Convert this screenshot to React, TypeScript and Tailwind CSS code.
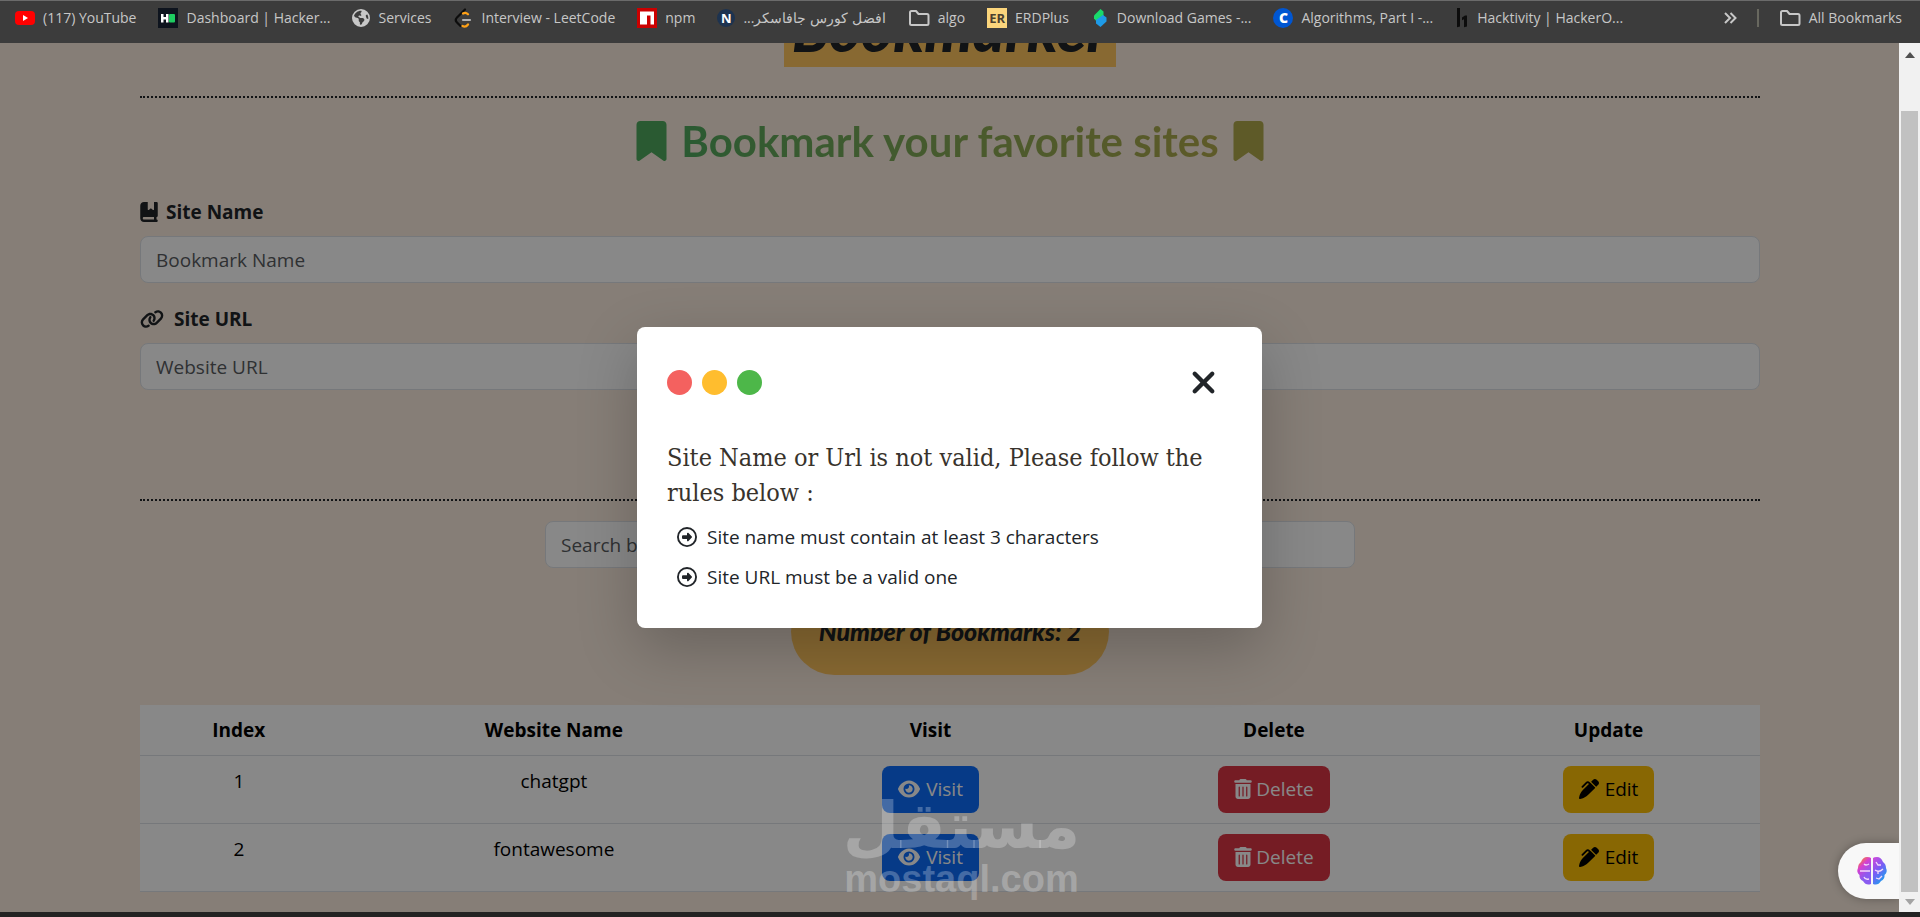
import type { ReactNode } from "react";
import {
  FaBookBookmark,
  FaBookmark,
  FaEarthAmericas,
  FaEye,
  FaLink,
  FaPenClip,
  FaRegCircleRight,
  FaTrashCan,
  FaXmark,
} from "react-icons/fa6";

const UI = "font-['Open_Sans','Noto_Sans',sans-serif]";

function YoutubeIcon() {
  return (
    <svg viewBox="0 0 20 20" className="size-5 shrink-0" aria-hidden="true">
      <rect x="0" y="3" width="20" height="14" rx="4" fill="#ff0000" />
      <path d="M8 7v6l5-3z" fill="#fff" />
    </svg>
  );
}

function HackerRankIcon() {
  return (
    <svg viewBox="0 0 20 20" className="size-5 shrink-0" aria-hidden="true">
      <rect width="20" height="20" fill="#0e141e" />
      <path d="M3 6h2.500v3H8V6h2.500v8.500H8v-3H5.500v3H3z" fill="#fff" />
      <rect x="11" y="6" width="6" height="8.500" rx="1" fill="#1ecd61" />
    </svg>
  );
}

function LeetCodeIcon() {
  return (
    <svg viewBox="0 0 20 20" className="size-5 shrink-0" fill="none" strokeWidth="2.200" strokeLinecap="round" aria-hidden="true">
      <path d="M11 1.500 3 9.500c-1.500 1.500-1.500 3.500 0 5l3.500 3.500" stroke="#0d0d0d" />
      <path d="M9 5.500c2-1.300 3.500-.8 5 .8M8.500 18c2 1 4 .5 5.500-1.500" stroke="#ffa116" />
      <path d="M9 12h7" stroke="#b3b3b3" />
    </svg>
  );
}

function NpmIcon() {
  return (
    <svg viewBox="0 0 20 20" className="size-5 shrink-0" aria-hidden="true">
      <rect width="20" height="20" fill="#cb0000" />
      <path d="M3 3.500h14v13h-3.500v-9H10v9H3z" fill="#fff" />
    </svg>
  );
}

function FolderIcon() {
  return (
    <svg viewBox="0 0 22 20" className="h-5 w-[22px] shrink-0" fill="none" stroke="#c7c7c7" strokeWidth="2" strokeLinejoin="round" aria-hidden="true">
      <path d="M2 4.500Q2 3 3.500 3H8l2.500 3h8.500q1.500 0 1.500 1.500v8q0 1.500-1.500 1.500H3.500Q2 17 2 15.500z" />
    </svg>
  );
}

function GamesIcon() {
  return (
    <svg viewBox="0 0 18 20" className="h-5 w-[18px] shrink-0" aria-hidden="true">
      <path d="M9.500 1 12.500 3.500V8L8 12.500 6 14 3 10.500V7.500z" fill="#19d96b" />
      <path d="M12 7 15.500 9.500v4L9.500 19 5 15.500V12z" fill="#1e9be8" />
    </svg>
  );
}

function HackerOneIcon() {
  return (
    <svg viewBox="0 0 14 20" className="h-5 w-3.5 shrink-0" fill="#0c0c0c" aria-hidden="true">
      <path d="M2 0h3v18.500l-3 .8zM12 7.500v11l-3 .8v-8l-2 1V9.500l3-2z" />
    </svg>
  );
}

const bookmarks: { label: string; icon: ReactNode; rtl?: boolean }[] = [
  { label: "(117) YouTube", icon: <YoutubeIcon /> },
  { label: "Dashboard | Hacker...", icon: <HackerRankIcon /> },
  { label: "Services", icon: <FaEarthAmericas className="size-[18px] shrink-0" /> },
  { label: "Interview - LeetCode", icon: <LeetCodeIcon /> },
  { label: "npm", icon: <NpmIcon /> },
  {
    label: "افضل كورس جافاسكر...",
    rtl: true,
    icon: <span className="flex size-[18px] shrink-0 items-center justify-center rounded-full bg-[#1d3350] text-[13px] font-bold text-white">N</span>,
  },
  { label: "algo", icon: <FolderIcon /> },
  {
    label: "ERDPlus",
    icon: <span className="flex size-5 shrink-0 items-center justify-center bg-[#fbd57c] text-[13px] font-bold text-[#4a4030]">ER</span>,
  },
  { label: "Download Games -...", icon: <GamesIcon /> },
  {
    label: "Algorithms, Part I -...",
    icon: <span className="flex size-5 shrink-0 items-center justify-center rounded-full bg-[#0056d2] text-sm font-extrabold text-white">C</span>,
  },
  { label: "Hacktivity | HackerO...", icon: <HackerOneIcon /> },
];

function BookmarksBar() {
  return (
    <nav
      aria-label="Bookmarks"
      className="flex h-[43px] shrink-0 items-center border-t border-[#6b6b6b] bg-[#3c3c3c] pr-[18px] pb-2 pl-[15px] text-sm whitespace-nowrap text-[#c7c7c7]"
    >
      <div className="flex items-center gap-[22px]">
        {bookmarks.map((b) => (
          <a key={b.label} href="#" className="flex items-center gap-2">
            {b.icon}
            <span dir={b.rtl ? "rtl" : "ltr"}>{b.label}</span>
          </a>
        ))}
      </div>
      <div className="ml-auto flex items-center gap-5">
        <button type="button" aria-label="More bookmarks">
          <svg viewBox="0 0 14 14" className="size-3.5" fill="none" stroke="#c7c7c7" strokeWidth="2" aria-hidden="true">
            <path d="m2 2 5 5-5 5M7.500 2l5 5-5 5" />
          </svg>
        </button>
        <span className="h-[18px] w-0.5 bg-[#68685f]" />
        <a href="#" className="flex items-center gap-2">
          <FolderIcon />
          All Bookmarks
        </a>
      </div>
    </nav>
  );
}

function Scrollbar() {
  return (
    <div className="flex w-[21px] shrink-0 flex-col items-center bg-[#f1f1f1]" aria-hidden="true">
      <svg viewBox="0 0 10 6" className="mt-[9px] h-1.5 w-2.5" fill="#505050">
        <path d="M5 0l5 6H0z" />
      </svg>
      <div className="mt-[53px] w-[17px] flex-1 bg-[#c1c1c1]" />
      <svg viewBox="0 0 10 6" className="my-[7px] h-1.5 w-2.5" fill="#a3a3a3">
        <path d="M5 6l5-6H0z" />
      </svg>
    </div>
  );
}

const inputStyle =
  "h-[47px] w-full rounded-lg border border-[#dee2e6] bg-white px-[15px] text-[19px] text-[#212529] placeholder:text-[#595c5f]";

const cell = "border-b border-[#dee2e6] px-2.5 pt-2.5 pb-2 text-center align-top leading-[31px]";
const action = "inline-flex h-[47px] items-center rounded-lg px-4 align-top";

const sites = [
  { id: 1, name: "chatgpt" },
  { id: 2, name: "fontawesome" },
];

function SitesTable() {
  return (
    <table className="mt-[30px] w-full table-fixed border-collapse bg-white text-[19px] text-black">
      <colgroup>
        <col className="w-[12.2%]" />
        <col className="w-[26.7%]" />
        <col className="w-[19.8%]" />
        <col className="w-[22.6%]" />
        <col className="w-[18.7%]" />
      </colgroup>
      <thead>
        <tr className="h-[50px]">
          {["Index", "Website Name", "Visit", "Delete", "Update"].map((h) => (
            <th key={h} scope="col" className={`${cell} font-bold`}>
              {h}
            </th>
          ))}
        </tr>
      </thead>
      <tbody>
        {sites.map((s) => (
          <tr key={s.id} className="h-[68px]">
            <td className={cell}>{s.id}</td>
            <td className={cell}>{s.name}</td>
            <td className={cell}>
              <a href="#" className={`${action} gap-1.5 bg-[#0d6efd] text-white`}>
                <FaEye className="size-[22px]" />
                Visit
              </a>
            </td>
            <td className={cell}>
              <button type="button" className={`${action} gap-1 bg-[#dc3545] text-white`}>
                <FaTrashCan className="h-5 w-[18px]" />
                Delete
              </button>
            </td>
            <td className={cell}>
              <button type="button" className={`${action} gap-1.5 bg-[#ffc107] text-black`}>
                <FaPenClip className="size-5" />
                Edit
              </button>
            </td>
          </tr>
        ))}
      </tbody>
    </table>
  );
}

function RulesDialog() {
  return (
    <div className="absolute inset-0 flex items-center justify-center bg-black/[.467]">
      <div
        role="dialog"
        aria-labelledby="dialog-title"
        className="w-[625px] rounded-lg bg-white px-[30px] pt-[38px] pb-9 shadow-[0_20px_60px_rgba(0,0,0,0.22)]"
      >
        <div className="flex items-center justify-between pr-[11px]">
          <div className="flex gap-2.5">
            <span className="size-[25px] rounded-full bg-[#f4615f]" />
            <span className="size-[25px] rounded-full bg-[#ffbd2e]" />
            <span className="size-[25px] rounded-full bg-[#4db749]" />
          </div>
          <button type="button" aria-label="Close" className="text-[#212529]">
            <FaXmark className="size-[35px]" />
          </button>
        </div>
        <h2
          id="dialog-title"
          className="mt-10 font-['DejaVu_Serif_Condensed','DejaVu_Serif',serif] text-[25px] leading-[35px] text-[#38332c]"
        >
          Site Name or Url is not valid, Please follow the rules below :
        </h2>
        <ul className="mt-3 flex flex-col gap-2.5 pl-2.5 text-[19px] leading-[30px] text-[#212529]">
          {["Site name must contain at least 3 characters", "Site URL must be a valid one"].map((rule) => (
            <li key={rule} className="flex items-center gap-2.5">
              <FaRegCircleRight className="size-5" />
              {rule}
            </li>
          ))}
        </ul>
      </div>
    </div>
  );
}

function AssistantTab() {
  return (
    <button
      type="button"
      aria-label="Assistant"
      className="absolute right-0 bottom-[13px] flex h-14 w-[61px] items-center rounded-l-full bg-[#f8f8f8] pl-[18px] shadow-[0_0_10px_rgba(0,0,0,0.3)]"
    >
      <svg viewBox="0 0 32 30" className="h-[30px] w-8" aria-hidden="true">
        <defs>
          <linearGradient id="brain-left" x1="0" y1="0" x2="0.5" y2="1">
            <stop offset="0.1" stopColor="#ff8a1f" />
            <stop offset="0.4" stopColor="#d63fd0" />
            <stop offset="0.8" stopColor="#8a5cf0" />
          </linearGradient>
          <linearGradient id="brain-right" x1="0" y1="0" x2="0.6" y2="1">
            <stop offset="0" stopColor="#d648d8" />
            <stop offset="0.5" stopColor="#7a5cf5" />
            <stop offset="1" stopColor="#1aa0ee" />
          </linearGradient>
        </defs>
        <path d="M15 2v26q-5 2-8-3-4-2-3.500-6Q0 16 2 12q0-4 3-6 2-5 6-5 3 0 4 1z" fill="url(#brain-left)" />
        <path d="M17 2v26q5 2 8-3 4-2 3.500-6Q32 16 30 12q0-4-3-6-2-5-6-5-3 0-4 1z" fill="url(#brain-right)" />
        <path d="M8 8q2 2 5 0M4 15h10M8 21q1 3 5 2M20 6l2 3h3M19 14q4 3 8-1M22 15v3M20 22l3 1 3-3" fill="none" stroke="#f4d8fa" strokeWidth="1.300" />
      </svg>
    </button>
  );
}

function Watermark() {
  return (
    <div className="pointer-events-none absolute inset-x-0 bottom-3 flex flex-col items-center pl-6 text-white/25">
      <span dir="rtl" className="font-['DejaVu_Sans',sans-serif] text-[65px] leading-[64px] font-bold">
        مستقل
      </span>
      <span className="font-['Liberation_Sans',sans-serif] text-[38px] leading-[42px] font-bold">mostaql.com</span>
    </div>
  );
}

export default function App() {
  return (
    <div className={`flex h-screen flex-col overflow-hidden bg-[#232323] ${UI}`}>
      <BookmarksBar />
      <div className="flex min-h-0 flex-1">
        <div className="relative flex-1 overflow-hidden bg-[#fbecdf]">
          <main className="pr-[139px] pl-[140px]">
            <h1 className="mx-auto -mt-[52px] w-fit bg-[#ffc55f] px-2 font-['Lato',sans-serif] text-[61px] leading-[76px] font-black text-[#212529] italic">
              Bookmarker
            </h1>
            <hr className="mt-[29px] border-t-2 border-dotted border-[#212529]" />
            <div className="mt-[23px] flex items-center justify-center gap-3.5">
              <FaBookmark className="h-10 w-[31px] text-[#4fa95e]" />
              <h2 className="bg-linear-to-r from-[#4fa95e] to-[#b0a94b] bg-clip-text font-['Lato',sans-serif] text-[42px] leading-10 font-bold text-transparent">
                Bookmark your favorite sites
              </h2>
              <FaBookmark className="h-10 w-[31px] text-[#b0a94b]" />
            </div>
            <form>
              <label htmlFor="site-name" className="mt-9 flex items-center gap-2 text-[19px] leading-[30px] font-bold text-[#212529]">
                <FaBookBookmark className="h-5 w-[18px]" />
                Site Name
              </label>
              <input id="site-name" type="text" placeholder="Bookmark Name" className={`mt-[9px] ${inputStyle}`} />
              <label htmlFor="site-url" className="mt-[21px] flex items-center gap-2.5 text-[19px] leading-[30px] font-bold text-[#212529]">
                <FaLink className="size-6" />
                Site URL
              </label>
              <input id="site-url" type="url" placeholder="Website URL" className={`mt-[9px] ${inputStyle}`} />
            </form>
            <hr className="mt-[109px] border-t-2 border-dotted border-[#212529]" />
            <div className="mx-auto mt-5 w-1/2">
              <input type="search" aria-label="Search" placeholder="Search by name" className={inputStyle} />
            </div>
            <p className="mx-auto mt-5 flex h-[87px] w-fit items-center rounded-[44px] bg-[#ffc55f] px-7 py-2.5 font-['Lato',sans-serif] text-[25px] font-black text-[#212529] italic">
              Number of Bookmarks: 2
            </p>
            <SitesTable />
          </main>
          <RulesDialog />
          <Watermark />
          <AssistantTab />
        </div>
        <Scrollbar />
      </div>
      <div className="h-[5px] shrink-0 bg-[#232323]" />
    </div>
  );
}
